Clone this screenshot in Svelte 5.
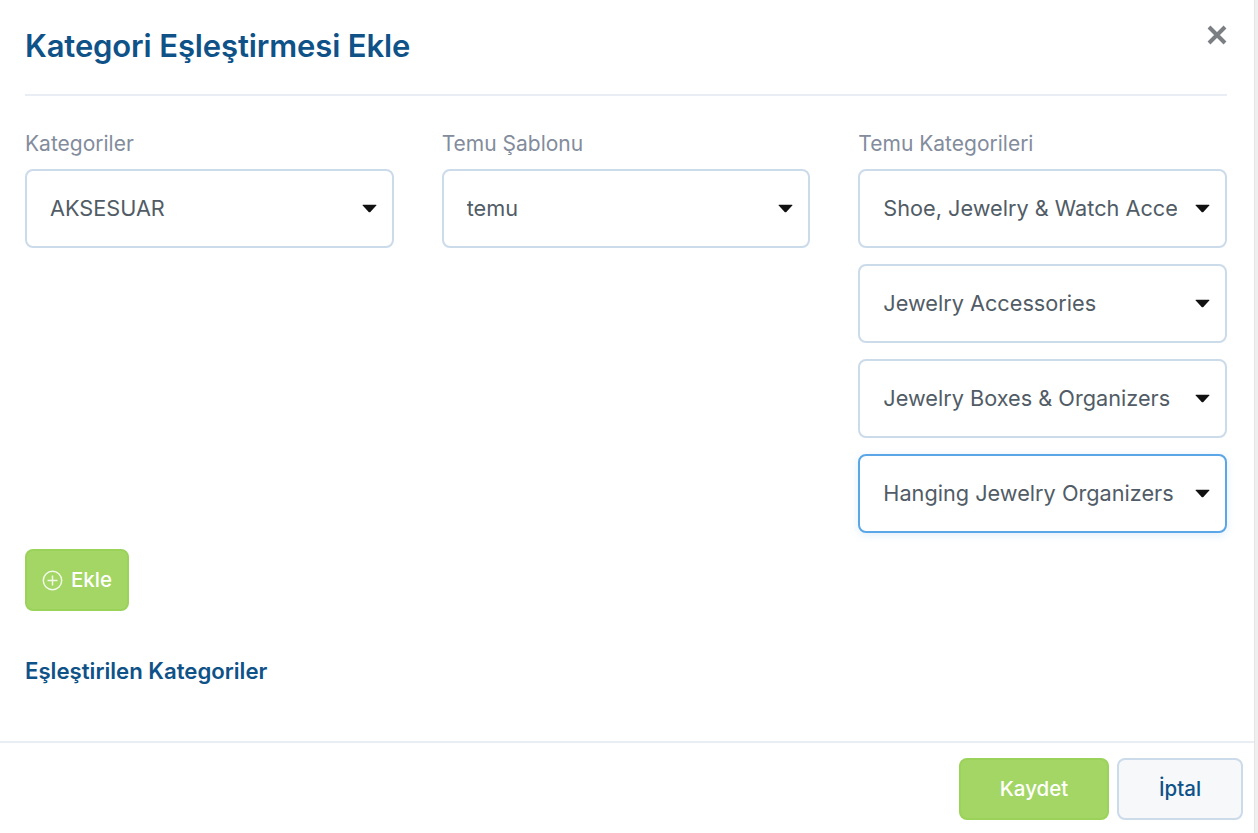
<script>
  const columns = [
    { label: 'Kategoriler', selects: [{ text: 'AKSESUAR' }] },
    { label: 'Temu Şablonu', selects: [{ text: 'temu' }] },
    {
      label: 'Temu Kategorileri',
      selects: [
        { text: 'Shoe, Jewelry & Watch Accessories' },
        { text: 'Jewelry Accessories' },
        { text: 'Jewelry Boxes & Organizers' },
        { text: 'Hanging Jewelry Organizers', focused: true }
      ]
    }
  ];
</script>

<div class="modal">
  <div class="body">
    <header class="head">
      <h1>Kategori Eşleştirmesi Ekle</h1>
      <button class="close" aria-label="Kapat">
        <svg width="20" height="20" viewBox="0 0 20 20"><path d="M2 2 L18 18 M18 2 L2 18" stroke="#7b7f83" stroke-width="4" fill="none"/></svg>
      </button>
    </header>

    <div class="grid">
      {#each columns as col}
        <div class="col">
          <div class="label">{col.label}</div>
          <div class="stack">
            {#each col.selects as s}
              <div class="select" class:focused={s.focused}>
                <span class="value">{s.text}</span>
                <svg class="caret" width="15" height="9" viewBox="0 0 14 8"><path d="M1 0.5 H13 Q14 0.5 13.3 1.3 L7.8 7.2 Q7 8 6.2 7.2 L0.7 1.3 Q0 0.5 1 0.5 Z" fill="#111"/></svg>
              </div>
            {/each}
          </div>
        </div>
      {/each}
    </div>

    <button class="add">
      <svg width="21" height="21" viewBox="0 0 21 21" fill="none" stroke="#fff" stroke-opacity="0.85" stroke-width="1.5"><circle cx="10.5" cy="10.5" r="9.2"/><path d="M10.5 5.5 V15.5 M5.5 10.5 H15.5"/></svg>
      <span class="add-text">Ekle</span>
    </button>

    <h2>Eşleştirilen Kategoriler</h2>
  </div>

  <footer class="foot">
    <button class="save">Kaydet</button>
    <button class="cancel">İptal</button>
  </footer>
</div>

<style>
  :global(body) {
    margin: 0;
    background: #fff;
  }
  .modal {
    width: 1255px;
    height: 833px;
    box-sizing: border-box;
    display: flex;
    flex-direction: column;
    background: #fff;
    border-right: 1px solid #e4e4e4;
    font-family: Inter, "Noto Sans", sans-serif;
    box-shadow: 3px 0 0 #efefef;
  }
  .body {
    flex: 1;
    padding: 0 27px 0 25px;
  }
  .head {
    height: 94px;
    border-bottom: 2px solid #e9eef4;
    display: flex;
    justify-content: space-between;
    align-items: flex-start;
  }
  h1 {
    margin: 26px 0 0;
    font-size: 31px;
    line-height: 40px;
    font-weight: 600;
    letter-spacing: -0.12px;
    color: #0f5288;
  }
  .close {
    margin-top: 25px;
    border: 0;
    padding: 0;
    background: none;
    line-height: 0;
  }
  .grid {
    display: grid;
    grid-template-columns: repeat(3, minmax(0, 1fr));
    gap: 48px;
    margin-top: 34px;
  }
  .label {
    font-size: 21px;
    line-height: 28px;
    color: #838c9c;
    margin-bottom: 11px;
  }
  .stack {
    display: flex;
    flex-direction: column;
    gap: 16px;
  }
  .select {
    height: 79px;
    box-sizing: border-box;
    border: 2px solid #cbdbea;
    border-radius: 8px;
    background: #fff;
    display: flex;
    align-items: center;
    padding: 0 15px 0 23px;
    gap: 18px;
  }
  .select.focused {
    border-color: #5aa6e6;
    box-shadow: 0 2px 8px rgba(90, 166, 230, 0.18);
  }
  .value {
    flex: 1;
    min-width: 0;
    overflow: hidden;
    white-space: nowrap;
    font-size: 21.7px;
    line-height: 28px;
    margin-bottom: 2px;
    color: #515c66;
  }
  .caret {
    flex: none;
  }
  button {
    font-family: inherit;
  }
  .add {
    display: flex;
    align-items: center;
    gap: 8px;
    margin-top: 16px;
    height: 62px;
    width: 104px;
    padding: 0 0 0 15px;
    box-sizing: border-box;
    border: 2px solid #9bd35a;
    border-radius: 8px;
    background: #a3d665;
    color: #fff;
    font-size: 20.5px;
    font-weight: 500;
  }
  .add-text {
    margin-bottom: 2px;
  }
  h2 {
    margin: 46px 0 0;
    font-size: 22.2px;
    line-height: 28px;
    font-weight: 600;
    color: #0f5288;
  }
  .foot {
    height: 92px;
    box-sizing: border-box;
    border-top: 2px solid #e9eef4;
    display: flex;
    justify-content: flex-end;
    gap: 8px;
    padding: 15px 11px 0 0;
  }
  .save,
  .cancel {
    height: 62px;
    padding: 0 0 2px;
    border-radius: 8px;
    font-size: 20.5px;
    font-weight: 500;
    box-sizing: border-box;
  }
  .save {
    width: 150px;
    border: 2px solid #9bd35a;
    background: #a3d665;
    color: #fff;
  }
  .cancel {
    width: 126px;
    border: 2px solid #cbdbea;
    background: #f6f8fa;
    color: #0f5288;
  }
</style>
